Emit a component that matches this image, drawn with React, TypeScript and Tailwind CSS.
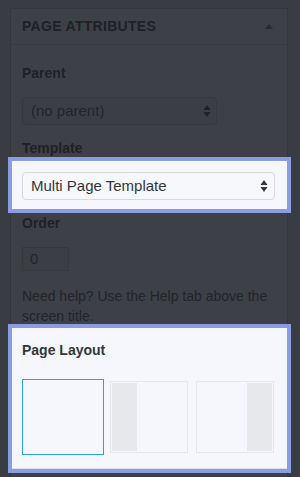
import React from "react";

function Arrows({ color }: { color: string }) {
  return (
    <svg width="8" height="14" viewBox="0 0 8 14" aria-hidden>
      <path d="M4 1 L7.5 6 L0.5 6 Z" fill={color} />
      <path d="M0.5 8 L7.5 8 L4 13 Z" fill={color} />
    </svg>
  );
}

export default function App() {
  return (
    <div
      className="w-[300px] h-[477px] overflow-hidden bg-[#3a3c43] pt-[8px] pl-[10px]"
      style={{ fontFamily: '"Liberation Sans", Arial, sans-serif' }}
    >
      <div className="w-[278px] h-[480px] border border-[#34363c] bg-[#3e4047]">
        <div className="h-[36px] flex items-center justify-between pl-[11px] pr-[14px] border-b border-[#383a40]">
          <span className="text-[14px] font-bold tracking-[0.3px] text-[#1f2126]">
            PAGE ATTRIBUTES
          </span>
          <svg width="8" height="5" viewBox="0 0 8 5" aria-hidden>
            <path d="M4 0 L8 5 L0 5 Z" fill="#2a2c32" />
          </svg>
        </div>

        <div className="pl-[11px] pr-[11px]">
          <div className="mt-[20px] leading-[16px] text-[14px] font-bold text-[#1f2126]">Parent</div>
          <div className="mt-[16px] w-[195px] h-[28px] rounded-[4px] border border-[#37393f] bg-[#3c3e45] flex items-center justify-between pl-[8px] pr-[5px]">
            <span className="text-[15px] text-[#222429]">(no parent)</span>
            <Arrows color="#1e2025" />
          </div>

          <div className="mt-[15px] leading-[16px] text-[14px] font-bold text-[#1f2126]">Template</div>
          <div className="mt-[1px] ml-[-14px] mr-[-15px] border-[4px] border-[#8a9de2] bg-[#f5f7fc] pt-[11px] pb-[9px] pl-[10px] pr-[12px]">
            <div className="h-[28px] rounded-[4px] border border-[#d8d9de] bg-[#f7f8fc] flex items-center justify-between pl-[8px] pr-[6px]">
              <span className="text-[15px] text-[#32373c]">Multi Page Template</span>
              <Arrows color="#32373c" />
            </div>
          </div>

          <div className="mt-[2px] leading-[16px] text-[14px] font-bold text-[#1f2126]">Order</div>
          <div className="mt-[16px] w-[47px] h-[24px] border border-[#37393f] bg-[#3c3e45] flex items-center pl-[7px]">
            <span className="text-[15px] text-[#222429]">0</span>
          </div>

          <div className="mt-[15px] text-[14px] leading-[20px] text-[#222429]">
            Need help? Use the Help tab above the screen title.
          </div>

          <div className="mt-[-2px] ml-[-14px] mr-[-15px] border-[4px] border-[#8a9de2] bg-[#f5f7fc]">
            <div className="h-[141px] border-b border-[#dfe0e4] pt-[14px] pl-[10px]">
              <div className="leading-[16px] text-[14px] font-bold text-[#32373c]">Page Layout</div>
              <div className="mt-[21px] flex gap-[4px]">
                <div className="w-[82px] h-[76px] border border-[#2ea2d8] bg-[#f5f7fc]" />
                <div className="w-[82px] h-[76px] p-[2px]">
                  <div className="w-full h-full border border-[#e6e7ec] p-[1px] flex">
                    <div className="w-[25px] h-full bg-[#e7e8ec]" />
                  </div>
                </div>
                <div className="w-[82px] h-[76px] p-[2px]">
                  <div className="w-full h-full border border-[#e6e7ec] p-[1px] flex justify-end">
                    <div className="w-[25px] h-full bg-[#e7e8ec]" />
                  </div>
                </div>
              </div>
            </div>
          </div>
        </div>
      </div>
    </div>
  );
}
